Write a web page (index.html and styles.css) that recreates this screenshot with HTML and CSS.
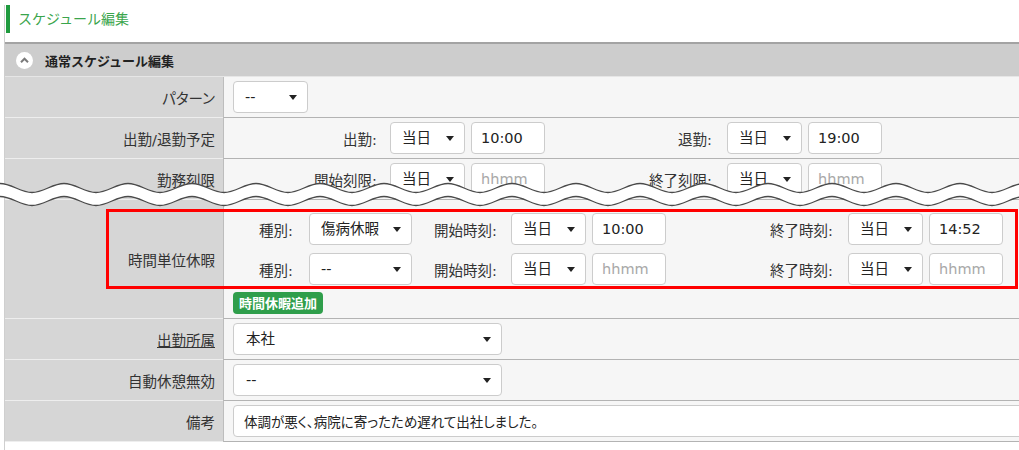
FILE: index.html
```html
<!DOCTYPE html>
<html lang="ja">
<head>
  <meta charset="UTF-8" />
  <meta name="viewport" content="width=device-width, initial-scale=1.0" />
  <title>スケジュール編集</title>
  <link rel="stylesheet" href="styles.css">
</head>
<body>
  <div class="page">
    <h1 class="page-title">スケジュール編集</h1>

    <section class="panel">
      <div class="panel-head">
        <span class="toggle">
          <svg width="17" height="17" viewBox="0 0 17 17">
            <circle cx="8.5" cy="8.5" r="8.5" fill="#fff" />
            <path d="M5 10.2 L8.5 6.7 L12 10.2" fill="none" stroke="#7a7a7a" stroke-width="2" />
          </svg>
        </span>
        <h2>通常スケジュール編集</h2>
      </div>

      <div class="form-table">
        <!-- パターン -->
        <div class="form-row">
          <div class="row-label">パターン</div>
          <div class="row-field">
            <span class="select w-sm"><select><option>--</option></select></span>
          </div>
        </div>

        <!-- 予定 -->
        <div class="form-row">
          <div class="row-label">出勤/退勤予定</div>
          <div class="row-field line">
            <span class="lbl lbl-a">出勤:</span>
            <span class="select w-sm"><select><option>当日</option></select></span>
            <input type="text" class="text-input time" value="10:00" />
            <span class="lbl lbl-b">退勤:</span>
            <span class="select w-sm"><select><option>当日</option></select></span>
            <input type="text" class="text-input time" value="19:00" />
          </div>
        </div>

        <!-- 刻限 -->
        <div class="form-row">
          <div class="row-label">勤務刻限</div>
          <div class="row-field line">
            <span class="lbl lbl-a">開始刻限:</span>
            <span class="select w-sm"><select><option>当日</option></select></span>
            <input type="text" class="text-input time" placeholder="hhmm" />
            <span class="lbl lbl-b">終了刻限:</span>
            <span class="select w-sm"><select><option>当日</option></select></span>
            <input type="text" class="text-input time" placeholder="hhmm" />
          </div>
        </div>

        <!-- 時間単位休暇 -->
        <div class="form-row leave-row">
          <div class="row-label">時間単位休暇</div>
          <div class="row-field leave-field">
            <div class="line">
              <span class="lbl lbl-kind">種別:</span>
              <span class="select w-md"><select><option>傷病休暇</option></select></span>
              <span class="lbl lbl-start">開始時刻:</span>
              <span class="select w-sm"><select><option>当日</option></select></span>
              <input type="text" class="text-input time" value="10:00" />
              <span class="lbl lbl-b">終了時刻:</span>
              <span class="select w-sm"><select><option>当日</option></select></span>
              <input type="text" class="text-input time" value="14:52" />
            </div>
            <div class="line">
              <span class="lbl lbl-kind">種別:</span>
              <span class="select w-md"><select><option>--</option></select></span>
              <span class="lbl lbl-start">開始時刻:</span>
              <span class="select w-sm"><select><option>当日</option></select></span>
              <input type="text" class="text-input time" placeholder="hhmm" />
              <span class="lbl lbl-b">終了時刻:</span>
              <span class="select w-sm"><select><option>当日</option></select></span>
              <input type="text" class="text-input time" placeholder="hhmm" />
            </div>
            <button class="btn-add">時間休暇追加</button>
          </div>
          <div class="highlight"></div>
        </div>

        <!-- 出勤所属 -->
        <div class="form-row">
          <div class="row-label"><a href="#" class="link">出勤所属</a></div>
          <div class="row-field">
            <span class="select w-lg"><select><option>本社</option></select></span>
          </div>
        </div>

        <!-- 自動休憩無効 -->
        <div class="form-row">
          <div class="row-label">自動休憩無効</div>
          <div class="row-field">
            <span class="select w-lg"><select><option>--</option></select></span>
          </div>
        </div>

        <!-- 備考 -->
        <div class="form-row">
          <div class="row-label">備考</div>
          <div class="row-field note-field">
            <input type="text" class="text-input note" value="体調が悪く、病院に寄ったため遅れて出社しました。" />
          </div>
        </div>

        <!-- screenshot cut mark -->
        <svg class="cut-mark" width="100%" height="32">
          <defs>
            <pattern id="wave" width="64" height="32" patternUnits="userSpaceOnUse">
              <path d="M0 5.5 C11.6 5.5 20.4 14.5 32 14.5 C43.6 14.5 52.4 5.5 64 5.5 L64 18.5 C52.4 18.5 43.6 27.5 32 27.5 C20.4 27.5 11.6 18.5 0 18.5 Z" fill="#fff" />
              <path d="M0 5.5 C11.6 5.5 20.4 14.5 32 14.5 C43.6 14.5 52.4 5.5 64 5.5" fill="none" stroke="#4a4a4a" stroke-width="1.3" />
              <path d="M0 18.5 C11.6 18.5 20.4 27.5 32 27.5 C43.6 27.5 52.4 18.5 64 18.5" fill="none" stroke="#4a4a4a" stroke-width="1.3" />
            </pattern>
          </defs>
          <rect x="0" y="0" width="100%" height="32" fill="url(#wave)" />
        </svg>
      </div>
    </section>
  </div>
</body>
</html>
```

FILE: styles.css
```css
body {
  margin: 0;
  font-family: "DejaVu Sans", "Noto Sans CJK JP", sans-serif;
  font-size: 14.5px;
  color: #333;
  background: #fff;
}
.page {
  margin-left: 4px;
  border-left: 1px solid #cfcfcf;
  min-height: 100vh;
  box-sizing: border-box;
}
.page-title {
  margin: 5px 0 9px 1px;
  height: 28px;
  line-height: 28px;
  border-left: 4px solid #1f9a3e;
  padding-left: 8px;
  font-size: 14px;
  font-weight: normal;
  color: #3aa54c;
}
.panel-head {
  display: flex;
  align-items: center;
  height: 32px;
  padding-left: 11px;
  background: #cdcdcd;
  border-top: 2px solid #a3a3a3;
  border-bottom: 1px solid #e6e6e6;
}
.toggle {
  display: flex;
  margin-right: 12px;
}
.panel-head h2 {
  margin: 0;
  font-size: 13px;
  font-weight: bold;
  color: #222;
}
.form-table {
  position: relative;
}
.form-row {
  display: grid;
  grid-template-columns: 218px 1fr;
}
.row-label {
  display: flex;
  align-items: center;
  justify-content: flex-end;
  padding-right: 8px;
  background: #d6d6d6;
  border-bottom: 1px solid #eeeeee;
  white-space: nowrap;
  font-feature-settings: "palt";
}
.row-field {
  background: #f6f6f6;
  border-left: 1px solid #bdbdbd;
  border-bottom: 1px solid #b3b3b3;
  padding: 4px 8px 4px 9px;
  min-width: 0;
}
.line {
  display: flex;
  align-items: center;
}
.lbl {
  box-sizing: border-box;
  text-align: right;
  padding-right: 13px;
  white-space: nowrap;
}
.lbl-a { width: 157px; }
.lbl-b { width: 182px; padding-right: 15px; }
.lbl-kind { width: 76px; padding-right: 16px; }
.lbl-start { width: 99px; padding-right: 14px; }
.select {
  position: relative;
  display: inline-block;
  flex: none;
}
.select select {
  -webkit-appearance: none;
  appearance: none;
  width: 100%;
  height: 32px;
  box-sizing: border-box;
  border: 1px solid #cccccc;
  border-radius: 4px;
  background: #fff;
  padding: 0 24px 0 11px;
  font-family: inherit;
  font-size: 14.5px;
  color: #222;
  outline: none;
}
.select::after {
  content: "";
  position: absolute;
  right: 11px;
  top: 14px;
  border-left: 4px solid transparent;
  border-right: 4px solid transparent;
  border-top: 5px solid #222;
  pointer-events: none;
}
.w-sm { width: 75px; }
.w-md { width: 103px; }
.w-lg { width: 269px; }
.w-lg select { padding-left: 12px; }
.text-input {
  height: 32px;
  box-sizing: border-box;
  border: 1px solid #cccccc;
  border-radius: 4px;
  background: #fff;
  padding: 0 9px;
  font-family: inherit;
  font-size: 14.5px;
  color: #222;
  outline: none;
}
.text-input::placeholder {
  color: #a8a8a8;
}
.time {
  width: 74px;
  margin-left: 6px;
  flex: none;
}
.leave-row {
  position: relative;
}
.leave-field {
  display: flex;
  flex-direction: column;
  align-items: flex-start;
  gap: 8px;
  padding-top: 13px;
}
.btn-add {
  margin-top: -1px;
  height: 22px;
  padding: 0 6px;
  border: none;
  border-radius: 4px;
  background: #2f9e4b;
  color: #fff;
  font-family: "Noto Sans CJK JP", sans-serif;
  font-size: 13px;
  font-weight: bold;
  line-height: 22px;
  cursor: pointer;
}
.highlight {
  position: absolute;
  left: 101px;
  top: 9px;
  width: 912px;
  height: 80px;
  box-sizing: border-box;
  border: 3px solid #f00;
  pointer-events: none;
}
.link {
  color: #333;
  text-decoration: underline;
}
.note-field {
  padding-right: 0;
  overflow: hidden;
}
.note {
  width: calc(100% + 4px);
  padding-left: 10px;
  font-size: 13.5px;
  font-feature-settings: "palt";
}
.cut-mark {
  position: absolute;
  left: -5px;
  top: 101px;
  width: calc(100% + 5px);
  height: 32px;
  pointer-events: none;
}
```
